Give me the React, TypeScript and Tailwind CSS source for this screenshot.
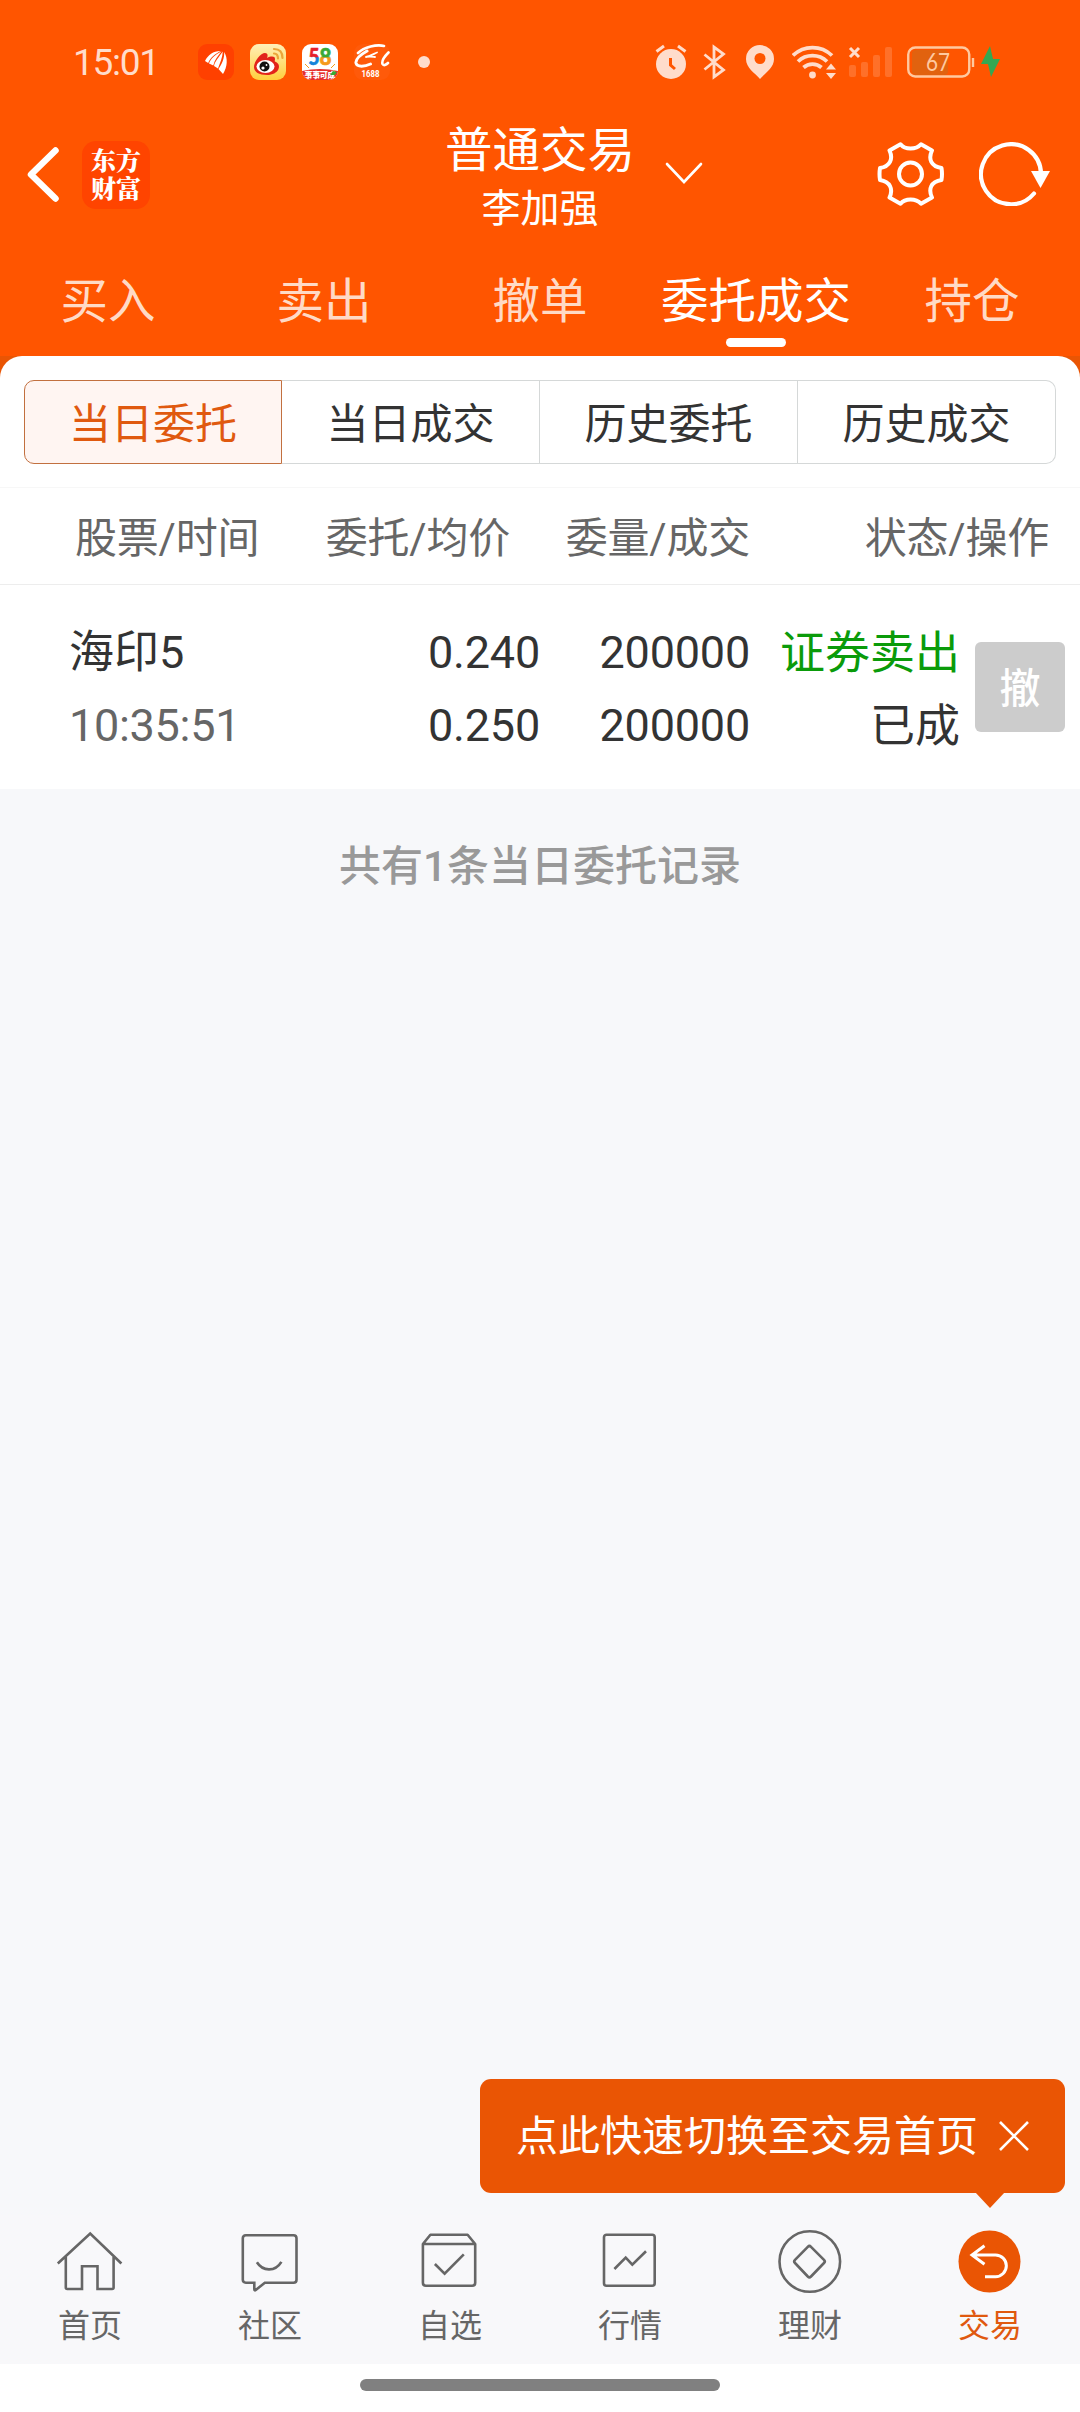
import React, { useState } from 'react';

const FONT = "font-[Roboto,'Noto_Sans_CJK_SC',sans-serif]";

const tabs = ['买入', '卖出', '撤单', '委托成交', '持仓'];
const segments = ['当日委托', '当日成交', '历史委托', '历史成交'];

interface Order {
  name: string;
  time: string;
  price: string;
  avgPrice: string;
  amount: string;
  dealt: string;
  side: string;
  status: string;
}

const orders: Order[] = [
  {
    name: '海印5',
    time: '10:35:51',
    price: '0.240',
    avgPrice: '0.250',
    amount: '200000',
    dealt: '200000',
    side: '证券卖出',
    status: '已成',
  },
];

const AppIcons = () => (
  <div className="flex items-center">
    {/* Eastmoney */}
    <svg className="w-9 h-9" viewBox="0 0 36 36">
      <rect width="36" height="36" rx="9" fill="#ff4000" />
      <g fill="#fff">
        <path d="M22.500 7C15 7 10 11 7 17l3.200 2C12 14 17 10 22.500 7z" />
        <path d="M23.500 7.300C17 11 12.500 15 11 19.500l4.300 2.100C16.500 16 20 12 23.500 7.300z" />
        <path d="M24.800 7.600C21.500 12.500 17 17 16 22l4 2.500C22 19 24.500 14 24.800 7.600z" />
        <path d="M26.200 8C26.500 14 24 20 20.500 25l4.500 5C29.500 23 30 14 26.200 8z" />
      </g>
    </svg>
    {/* Weibo */}
    <svg className="w-9 h-9 ml-4" viewBox="0 0 36 36">
      <defs>
        <linearGradient id="weibo" x1="0" y1="0" x2="0" y2="1">
          <stop offset="0" stopColor="#fff0b8" />
          <stop offset="1" stopColor="#ffce3d" />
        </linearGradient>
      </defs>
      <rect width="36" height="36" rx="9" fill="url(#weibo)" />
      <path d="M4 23c0-6 7-14 11-14 3 0 3 3 2 5 4-2 8-2 8 1 0 2-1 2 1 3 6 3 3 13-9 13-8 0-13-3-13-8z" fill="#e2231a" />
      <ellipse cx="15.500" cy="22.500" rx="9" ry="6.500" fill="#fff" />
      <circle cx="14.500" cy="22.500" r="5" fill="#111" />
      <circle cx="13" cy="24" r="1.600" fill="#fff" />
      <circle cx="16.500" cy="21" r="0.900" fill="#fff" />
      <path d="M24 9.500c3 0 4 2 4 5M24 5c6 0 8.500 4 8.500 9" stroke="#eba53a" strokeWidth="2.200" fill="none" strokeLinecap="round" />
    </svg>
    {/* 58 */}
    <svg className="w-9 h-9 ml-4" viewBox="0 0 36 36">
      <defs>
        <clipPath id="rounded58"><rect width="36" height="36" rx="9" /></clipPath>
        <linearGradient id="five" x1="0" y1="0" x2="0" y2="1">
          <stop offset="0.5" stopColor="#e5202c" />
          <stop offset="0.55" stopColor="#1683d8" />
        </linearGradient>
        <linearGradient id="eight" x1="0" y1="0" x2="0" y2="1">
          <stop offset="0.5" stopColor="#3aa935" />
          <stop offset="0.55" stopColor="#f59a1b" />
        </linearGradient>
      </defs>
      <g clipPath="url(#rounded58)">
        <rect width="36" height="36" fill="#fff" />
        <text x="6.500" y="21" fontSize="22" fontWeight="900" fill="url(#five)" stroke="url(#five)" strokeWidth="0.600" fontFamily="Lato, sans-serif" textLength="11" lengthAdjust="spacingAndGlyphs">5</text>
        <text x="17.500" y="21" fontSize="22" fontWeight="900" fill="url(#eight)" stroke="url(#eight)" strokeWidth="0.600" fontFamily="Lato, sans-serif" textLength="12" lengthAdjust="spacingAndGlyphs">8</text>
        <path d="M3 20l4 4M33 20l-4 4" stroke="#f59a1b" strokeWidth="1" />
        <path d="M0 27q18-4 36 0v9H0z" fill="#e5302c" />
        <text x="2.500" y="33.500" fontSize="8" fontWeight="900" fill="#fff" fontFamily="'Noto Sans CJK SC', sans-serif" textLength="31">事事可成</text>
        <path d="M28 31l3-4 4 1-2 3z" fill="#3aa935" />
      </g>
    </svg>
    {/* 1688 */}
    <svg className="w-9 h-9 ml-4" viewBox="0 0 36 36">
      <rect width="36" height="36" rx="9" fill="#ff5a0a" />
      <g stroke="#fff" fill="none" strokeLinecap="round">
        <path d="M30 2C23 0 10 3 4 9" strokeWidth="2.600" />
        <path d="M13 7C6 11 1.500 15.500 2 19c1 4.500 9 3.500 14.500 1" strokeWidth="3" />
        <path d="M12 13c5-1 9-4 11-4.500M12 13c4-1 8 0 9 0" strokeWidth="1.800" />
        <path d="M34.500 8.500c-4 4-7 8.500-6 11.500 1 2 3.500 1 5.500-1" strokeWidth="2.600" />
      </g>
      <text x="7.500" y="33" fontSize="9.500" fontWeight="700" fill="#fff" fontFamily="Roboto, sans-serif" textLength="18" lengthAdjust="spacingAndGlyphs">1688</text>
    </svg>
    <span className="w-3 h-3 ml-[28px] rounded-full bg-[#ffdccb]" />
  </div>
);

const SystemIcons = () => (
  <div className="flex items-center text-[#ffdccb]">
    <svg className="w-8 h-9" viewBox="0 0 32 36" fill="none">
      <circle cx="16" cy="20" r="15" fill="currentColor" />
      <path d="M1.500 7.500L9 2M30.500 7.500L23 2" stroke="currentColor" strokeWidth="3" />
      <path d="M15.500 14v7l4.500 4" stroke="#ff5500" strokeWidth="3" />
    </svg>
    <svg className="w-6 h-9 ml-4" viewBox="0 0 24 36" fill="none" stroke="currentColor" strokeWidth="2.800">
      <path d="M1.500 10.500L20.500 26 11 33V3l9.500 7L1.500 25.500" />
    </svg>
    <svg className="w-7 h-9 ml-[19px]" viewBox="0 0 28 36">
      <path d="M14 1a14 14 0 0 1 14 14c0 9-9 14-14 20C9 29 0 24 0 15A14 14 0 0 1 14 1z" fill="currentColor" />
      <circle cx="14" cy="14.500" r="5.500" fill="#ff5500" />
    </svg>
    <svg className="w-[45px] h-9 ml-[18px]" viewBox="0 0 45 36" fill="none" stroke="currentColor" strokeWidth="3.800">
      <path d="M1 11.500a28 28 0 0 1 39 0M6 17.500a21 21 0 0 1 29 0M11.500 23.500a13.500 13.500 0 0 1 18 0" />
      <circle cx="20.500" cy="31" r="3.400" fill="currentColor" stroke="none" />
      <path d="M34 25.500l5-6 5 6zM34 29l5 6 5-6z" fill="currentColor" stroke="none" />
    </svg>
    <svg className="w-[44px] h-9 ml-[11px]" viewBox="0 0 44 36">
      <path d="M2 4l9 9M11 4l-9 9" stroke="currentColor" strokeWidth="3" />
      <g fill="#ff7029">
        <rect x="1" y="21" width="7" height="12" rx="2" />
        <rect x="13" y="18" width="7" height="15" rx="2" />
        <rect x="25" y="11" width="7" height="22" rx="2" />
        <rect x="37" y="3" width="7" height="30" rx="2" />
      </g>
    </svg>
    <svg className="w-[68px] h-9 ml-[15px]" viewBox="0 0 68 36">
      <rect x="5" y="6" width="36" height="25" rx="4" fill="#e1620f" />
      <rect x="1.250" y="3.500" width="61" height="29" rx="7" fill="none" stroke="#ffc9a0" strokeWidth="2.400" />
      <path d="M66 14v9" stroke="#ffc9a0" strokeWidth="2.400" />
      <text x="19" y="27" fontSize="25" fill="#ffc9a0" fontFamily="Lato, sans-serif" textLength="24" lengthAdjust="spacingAndGlyphs">67</text>
    </svg>
    <svg className="w-5 h-9 ml-[6px]" viewBox="0 0 20 36">
      <path d="M9 2L0 20h7l3 13 9-18h-7z" fill="#34a853" />
    </svg>
  </div>
);

const NavIcon = ({ name }: { name: string }) => {
  if (name === '交易') {
    return (
      <svg className="w-16 h-16" viewBox="0 0 64 64" fill="none">
        <circle cx="31.500" cy="31.500" r="31" fill="#ea5504" />
        <path d="M26.500 15.700L14 25l12.500 9.300M14 25h23.500a10.800 10.800 0 0 1 0 21.700H27" stroke="#fff" strokeWidth="3" />
      </svg>
    );
  }
  return (
    <svg className="w-16 h-16 overflow-visible" viewBox="0 0 64 64" fill="none" stroke="#666" strokeWidth="2.600">
      {name === '首页' && (
        <path d="M-.2 33.500L32.200 3.500l31.200 30M7.800 27v30.500q0 1.500 1.500 1.500H24V36.300h15.500V59h14.600q1.500 0 1.500-1.500V27" />
      )}
      {name === '社区' && (
        <>
          <path d="M7.800 5.300h47.700q3 0 3 3v41.400q0 3-3 3H26.800l-9 7.300q-1.500 1-1.500-1v-6.300H7.800q-3 0-3-3V8.300q0-3 3-3z" />
          <path d="M18.900 32.300c6 9.500 18.500 9.500 24.500-.5" />
        </>
      )}
      {name === '自选' && (
        <>
          <path d="M4.900 14v38.700q0 3 3 3h46.300q3 0 3-3V14l-7.600-9.300H12.400zM4.900 14h52.300" strokeLinejoin="round" />
          <path d="M16.900 34l9.700 9.700 19.200-19.400" />
        </>
      )}
      {name === '行情' && (
        <>
          <rect x="6" y="4.700" width="50.700" height="51" rx="2.500" />
          <path d="M16.400 39l11.300-11.300 6.600 7L48 21.300" />
        </>
      )}
      {name === '理财' && (
        <>
          <circle cx="31.800" cy="31.500" r="30.300" />
          <path d="M29.800 16.800q1.600-1.600 3.200 0l13 13q1.600 1.600 0 3.200l-13 13.500q-1.600 1.600-3.200 0L17 33q-1.600-1.600 0-3.200z" />
        </>
      )}
    </svg>
  );
};

const StatusBar = () => (
  <div className="flex items-center justify-between h-[124px] pl-[73px] pr-[79px]">
    <div className="flex items-center">
      <span className="w-[125px] pt-0.5 text-[37px] leading-9 tracking-[-1.3px] text-[#ffdccb]">15:01</span>
      <AppIcons />
    </div>
    <SystemIcons />
  </div>
);

const TitleBar = () => (
  <div className="grid grid-cols-[440px_200px_1fr] h-[102px]">
    <div className="flex items-center pl-[26px] pb-0.5">
      <svg className="w-9 h-[60px]" viewBox="0 0 36 60" fill="none">
        <path d="M29.500 5.500L5 29.500l24.500 24" stroke="#fff" strokeWidth="6.500" strokeLinecap="round" strokeLinejoin="round" />
      </svg>
      <div className="flex items-center justify-center w-[68px] h-[68px] ml-[20px] pb-1 rounded-[14px] bg-[#ff4400] text-white">
        <p className="w-[50px] text-[25px] leading-[28px] font-black break-all font-['Noto_Serif_CJK_SC','Noto_Sans_CJK_SC',serif]">东方财富</p>
      </div>
    </div>
    <div className="flex flex-col items-center pt-0.5 text-white whitespace-nowrap">
      <h1 className="text-[47.500px] leading-[50px]">普通交易</h1>
      <p className="mt-[15px] text-[39px] leading-9">李加强</p>
    </div>
    <div className="flex items-center pb-[3px]">
      <svg className="w-10 h-6 ml-[24px]" viewBox="0 0 40 24" fill="none">
        <path d="M3 2l17 18L37 2" stroke="#fff" strokeWidth="2.600" strokeLinecap="round" />
      </svg>
      <svg className="w-[67px] h-16 ml-[173px]" viewBox="0 0 67 64" fill="none" stroke="#fff" strokeWidth="4">
        <path
          d="M23.500 2.300C28 8 39 8 44 2.300L55 8.500C51 17 54 24.500 64.500 26Q65.500 32 64.500 38C54 39.500 51 47 55 55.500L44 61.700C39 56 28 56 23.500 61.700L12.500 55.500C16.500 47 13 39.500 3 38Q2 32 3 26C13 24.500 16.500 17 12.500 8.500z"
          strokeLinejoin="round"
        />
        <circle cx="33.500" cy="32" r="11.500" />
      </svg>
      <svg className="w-[72px] h-16 ml-[35px]" viewBox="0 0 72 64" fill="none">
        <path d="M55 51.500A30 30 0 1 1 62 32" stroke="#fff" strokeWidth="4.200" strokeLinecap="round" />
        <path d="M52 29h19L61.500 46z" fill="#fff" />
      </svg>
    </div>
  </div>
);

export default function App() {
  const [activeTab, setActiveTab] = useState('委托成交');
  const [activeSegment, setActiveSegment] = useState('当日委托');
  const [tipOpen, setTipOpen] = useState(true);

  return (
    <div className={`relative flex flex-col w-[1080px] h-[2412px] bg-[#f7f8fa] text-[#333] ${FONT}`}>
      {/* Header */}
      <header className="bg-[#ff5500]">
        <StatusBar />
        <TitleBar />
        <nav className="grid grid-cols-5 h-[130px] pt-[52px]">
          {tabs.map((tab) => (
            <button
              key={tab}
              onClick={() => setActiveTab(tab)}
              className={`flex flex-col items-center text-[47.500px] leading-[48px] ${activeTab === tab ? 'text-white' : 'text-[#ffdac6]'}`}
            >
              {tab}
              {activeTab === tab && <span className="w-[60px] h-[9px] mt-3 rounded-full bg-white" />}
            </button>
          ))}
        </nav>
      </header>

      {/* Orders */}
      <main className="flex-1">
        <div className="bg-[#e95504]">
          <div className="rounded-t-[22px] bg-white pt-6">
            <div className="grid grid-cols-4 mx-6 h-[84px]">
              {segments.map((segment) => (
                <button
                  key={segment}
                  onClick={() => setActiveSegment(segment)}
                  className={`pt-[5px] text-[42px] leading-[48px] border first:rounded-l-[10px] last:rounded-r-[10px] ${
                    activeSegment === segment
                      ? 'border-[#c2703f] bg-[#fff5f2] text-[#e0590f]'
                      : 'border-[#d5d8d8] border-l-0 text-[#333]'
                  }`}
                >
                  {segment}
                </button>
              ))}
            </div>

            <div className="grid grid-cols-[264px_246px_240px_299px] items-center h-[98px] mt-[23px] pt-[5px] border-y border-t-[#f7f7f7] border-b-[#ededed] text-[42px] tracking-[-0.2px] text-[#666] text-right">
              <span className="pl-[75px] text-left whitespace-nowrap">股票/时间</span>
              <span>委托/均价</span>
              <span>委量/成交</span>
              <span>状态/操作</span>
            </div>

            {orders.map((order) => (
              <div
                key={order.time}
                className="grid grid-cols-[270px_270px_210px_210px_105px] items-center h-[204px] text-[45px] leading-[73px] text-right"
              >
                <div className="pl-[69px] pt-1 text-left">
                  <p>{order.name}</p>
                  <p className="tracking-[-0.3px] text-[#666]">{order.time}</p>
                </div>
                <div className="pt-1 tracking-[-0.2px]">
                  <p>{order.price}</p>
                  <p>{order.avgPrice}</p>
                </div>
                <div className="pt-1 tracking-[-0.2px]">
                  <p>{order.amount}</p>
                  <p>{order.dealt}</p>
                </div>
                <div className="pt-1.5">
                  <p className="text-[#0a9b0a]">{order.side}</p>
                  <p>{order.status}</p>
                </div>
                <button className="w-[90px] h-[90px] ml-[15px] pt-[5px] rounded-md bg-[#ccc] text-white text-[41px] leading-none font-medium">
                  撤
                </button>
              </div>
            ))}
          </div>
        </div>
        <p className="mt-[54px] text-center text-[42px] leading-[48px] font-medium text-[#999]">
          共有{orders.length}条当日委托记录
        </p>
      </main>

      {/* Bottom navigation */}
      <nav className="grid grid-cols-6 h-[149px] pt-[15px] bg-[#f8f8fa]">
        {['首页', '社区', '自选', '行情', '理财', '交易'].map((item) => (
          <button key={item} className="flex flex-col items-center">
            <NavIcon name={item} />
            <span className={`mt-[14px] text-[32px] leading-9 ${item === '交易' ? 'text-[#e0590f]' : 'text-[#666]'}`}>{item}</span>
          </button>
        ))}
      </nav>
      <div className="flex justify-center h-12 pt-[15px] bg-white">
        <span className="w-[360px] h-3 rounded-full bg-[#808080]" />
      </div>

      {/* Quick switch tip */}
      {tipOpen && (
        <div className="absolute left-[480px] top-[2079px] flex items-center w-[585px] h-[114px] pl-[36px] rounded-[11px] bg-[#ea5504] text-white">
          <span className="pt-0.5 text-[42px] leading-[48px] whitespace-nowrap">点此快速切换至交易首页</span>
          <button onClick={() => setTipOpen(false)} className="ml-5">
            <svg className="w-8 h-8" viewBox="0 0 32 32" stroke="#fff" strokeWidth="2.600">
              <path d="M2 2l28 28M30 2L2 30" />
            </svg>
          </button>
          <svg className="absolute left-[495px] top-[113px] w-[30px] h-4" viewBox="0 0 30 16">
            <path d="M0 0h30L15 16z" fill="#ea5504" />
          </svg>
        </div>
      )}
    </div>
  );
}
